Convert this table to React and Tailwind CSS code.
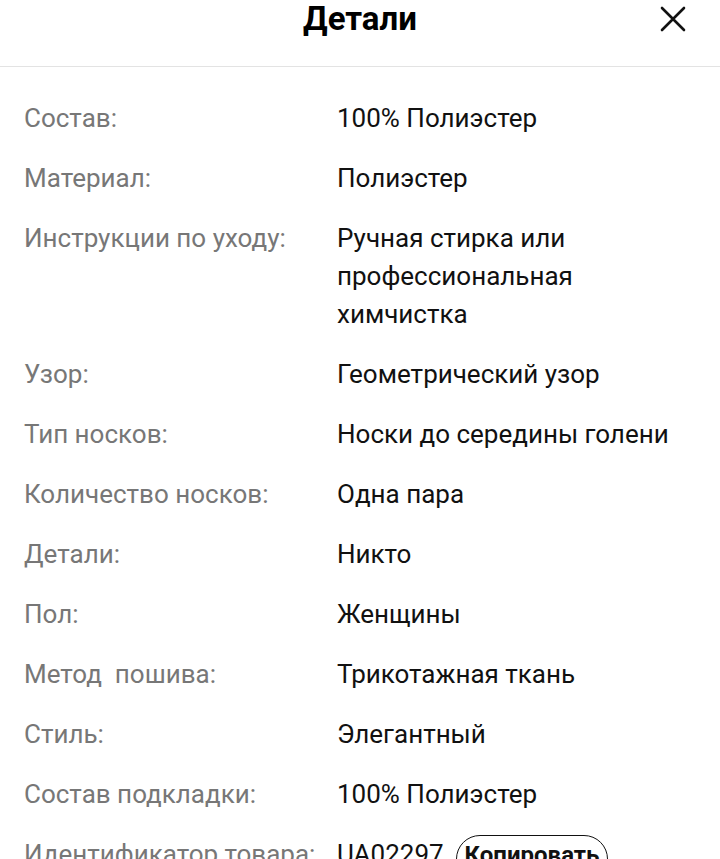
import React from "react";

const rows = [
  ["Состав:", "100% Полиэстер"],
  ["Материал:", "Полиэстер"],
  ["Инструкции по уходу:", "Ручная стирка или профессиональная химчистка"],
  ["Узор:", "Геометрический узор"],
  ["Тип носков:", "Носки до середины голени"],
  ["Количество носков:", "Одна пара"],
  ["Детали:", "Никто"],
  ["Пол:", "Женщины"],
  ["Метод\u00a0 пошива:", "Трикотажная ткань"],
  ["Стиль:", "Элегантный"],
  ["Состав подкладки:", "100% Полиэстер"],
];

export default function App() {
  return (
    <div
      className="w-[720px] h-[859px] overflow-hidden bg-white"
      style={{ fontFamily: "Roboto, 'Noto Sans', sans-serif" }}
    >
      <div className="relative h-[67px] border-b border-[#e3e3e3] flex justify-center">
        <div className="text-[33px] leading-[38px] font-bold text-black">Детали</div>
        <button className="absolute right-[30px] top-[2px] w-[34px] h-[34px] flex items-center justify-center">
          <svg width="26" height="26" viewBox="0 0 26 26" fill="none" stroke="#111" strokeWidth="2.6" strokeLinecap="round">
            <path d="M2 2 L24 24 M24 2 L2 24" />
          </svg>
        </button>
      </div>
      <div className="pt-[32px] pl-6 pr-6 flex flex-col gap-[22px]">
        {rows.map(([k, v], i) => (
          <div key={i} className="flex text-[26px] leading-[38px]">
            <div className="w-[313px] shrink-0 text-[#777777]">{k}</div>
            <div className="flex-1 text-[#111111]">{v}</div>
          </div>
        ))}
        <div className="flex text-[26px] leading-[38px]">
          <div className="w-[313px] shrink-0 text-[#777777] whitespace-nowrap">Идентификатор товара:</div>
          <div className="flex-1 text-[#111111] flex items-start gap-[12px]">
            <span>UA02297</span>
            <span className="border border-[#111] rounded-full px-[8px] pb-[8px] text-[24px] font-bold leading-[38px] whitespace-nowrap">Копировать</span>
          </div>
        </div>
      </div>
    </div>
  );
}
